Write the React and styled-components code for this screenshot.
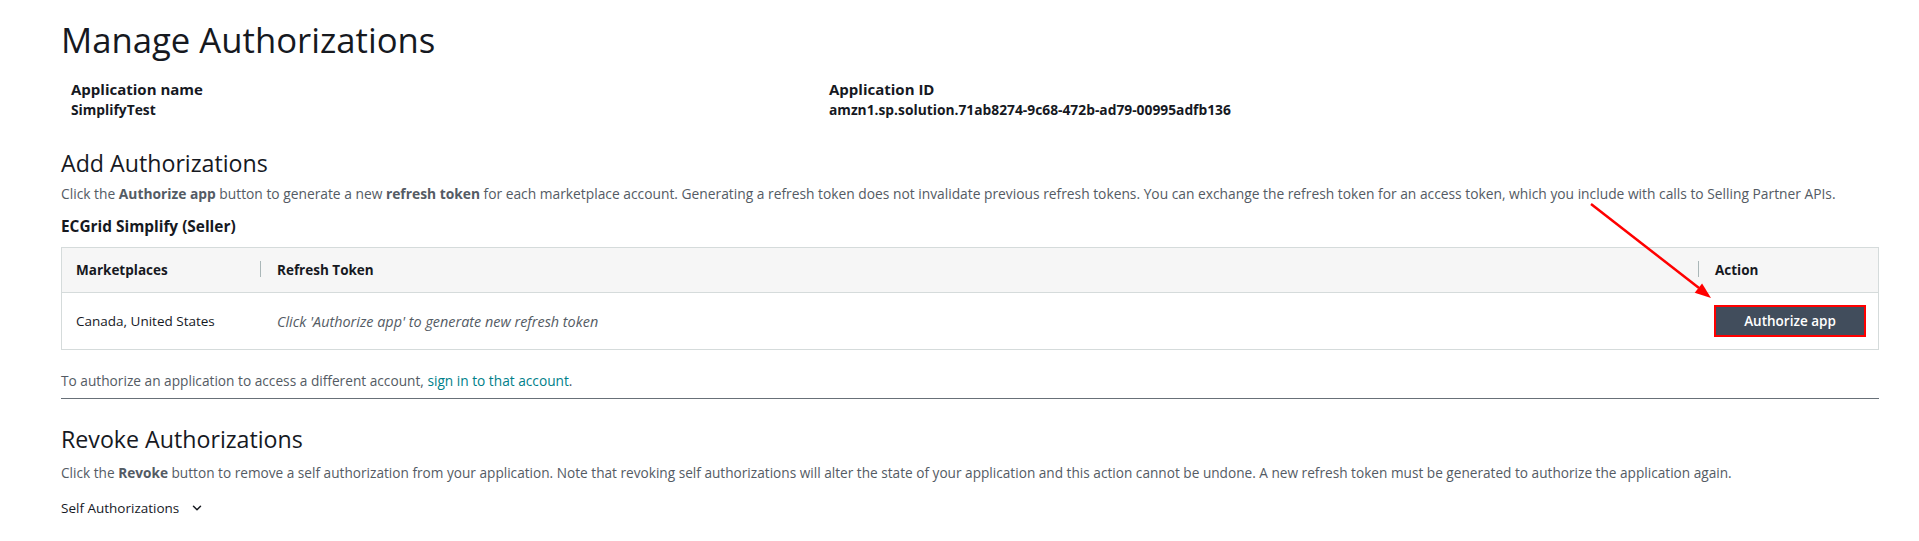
import React from 'react'
import styled, { createGlobalStyle } from 'styled-components'
import { ChevronDown } from 'lucide-react'

const GlobalStyle = createGlobalStyle`
  body {
    margin: 0;
    background: #fff;
    font-family: "Open Sans", "Liberation Sans", sans-serif;
    color: #16191f;
  }
`

const Page = styled.div`
  position: relative;
  padding: 0 40px 0 61px;
`

const Title = styled.h1`
  margin: 0;
  padding-top: 20px;
  font-size: 34.7px;
  font-weight: 400;
  line-height: 40px;
  color: #16191f;
`

const InfoGrid = styled.div`
  display: grid;
  grid-template-columns: 758px 1fr;
  padding: 18px 0 0 10px;
`

const InfoLabel = styled.div`
  font-size: 15px;
  font-weight: 700;
  line-height: 22px;
`

const InfoValue = styled.div`
  font-size: 13.8px;
  font-weight: 700;
  line-height: 20px;
`

const SectionTitle = styled.h2`
  margin: ${p => p.$top || 0}px 0 0;
  font-size: 23.2px;
  font-weight: 400;
  line-height: 30px;
  color: #16191f;
`

const Description = styled.p`
  margin: ${p => p.$top || 6}px 0 0;
  font-size: ${p => p.$size || 13.8}px;
  line-height: 20px;
  color: #545b64;

  b {
    font-weight: 700;
    color: #545b64;
  }
`

const GroupLabel = styled.div`
  margin-top: 13px;
  font-size: 15.4px;
  font-weight: 700;
  line-height: 20px;
`

const Table = styled.div`
  margin-top: 10px;
  border: 1px solid #d5dbdb;
  display: grid;
  grid-template-columns: 198px 1fr 180px;
`

const HeadCell = styled.div`
  position: relative;
  height: 44px;
  display: flex;
  align-items: center;
  padding-left: ${p => (p.$first ? 14 : 17)}px;
  background: #f6f6f6;
  border-bottom: 1px solid #d5dbdb;
  font-size: 13.5px;
  font-weight: 700;

  ${p =>
    !p.$first &&
    `
    &::before {
      content: '';
      position: absolute;
      left: 0;
      top: 13px;
      height: 16px;
      border-left: 1px solid #aab7b8;
    }
  `}
`

const BodyCell = styled.div`
  height: 56px;
  display: flex;
  align-items: center;
  padding-left: ${p => (p.$first ? 14 : 17)}px;
  font-size: ${p => (p.$italic ? 14.4 : 13.5)}px;
  font-style: ${p => (p.$italic ? 'italic' : 'normal')};
  color: ${p => (p.$italic ? '#545b64' : '#16191f')};
`

const AuthorizeButton = styled.button`
  width: 152px;
  height: 32px;
  margin-left: -1px;
  background: #414d5c;
  color: #fff;
  border: 2px solid #ff0000;
  font-family: inherit;
  font-size: 13.5px;
  font-weight: 600;
  cursor: pointer;
`

const Note = styled.p`
  margin: 21px 0 0;
  font-size: 13.7px;
  line-height: 20px;
  color: #545b64;

  a {
    color: #007f8a;
    text-decoration: none;
  }
`

const Divider = styled.hr`
  margin: 7px 0 0;
  border: none;
  border-top: 1.5px solid #687078;
`

const Disclosure = styled.div`
  margin-top: 15px;
  display: flex;
  align-items: center;
  gap: 11px;
  font-size: 13.5px;
  line-height: 20px;
  color: #16191f;
`

const ArrowOverlay = styled.svg`
  position: absolute;
  left: 0;
  top: 0;
  pointer-events: none;
`

export default function App() {
  return (
    <>
      <GlobalStyle />
      <Page>
        <Title>Manage Authorizations</Title>
        <InfoGrid>
          <div>
            <InfoLabel>Application name</InfoLabel>
            <InfoValue>SimplifyTest</InfoValue>
          </div>
          <div>
            <InfoLabel>Application ID</InfoLabel>
            <InfoValue>amzn1.sp.solution.71ab8274-9c68-472b-ad79-00995adfb136</InfoValue>
          </div>
        </InfoGrid>

        <SectionTitle $top={28}>Add Authorizations</SectionTitle>
        <Description>
          Click the <b>Authorize app</b> button to generate a new <b>refresh token</b> for each marketplace account.
          Generating a refresh token does not invalidate previous refresh tokens. You can exchange the refresh token
          for an access token, which you include with calls to Selling Partner APIs.
        </Description>
        <GroupLabel>ECGrid Simplify (Seller)</GroupLabel>
        <Table>
          <HeadCell $first>Marketplaces</HeadCell>
          <HeadCell>Refresh Token</HeadCell>
          <HeadCell>Action</HeadCell>
          <BodyCell $first>Canada, United States</BodyCell>
          <BodyCell $italic>Click 'Authorize app' to generate new refresh token</BodyCell>
          <BodyCell>
            <AuthorizeButton>Authorize app</AuthorizeButton>
          </BodyCell>
        </Table>
        <Note>
          To authorize an application to access a different account, <a href="#">sign in to that account</a>.
        </Note>
        <Divider />

        <SectionTitle $top={25}>Revoke Authorizations</SectionTitle>
        <Description $top={9} $size={13.65}>
          Click the <b>Revoke</b> button to remove a self authorization from your application. Note that revoking self
          authorizations will alter the state of your application and this action cannot be undone. A new refresh
          token must be generated to authorize the application again.
        </Description>
        <Disclosure>
          Self Authorizations
          <ChevronDown size={14} strokeWidth={2.5} />
        </Disclosure>

        <ArrowOverlay width="1919" height="541">
          <line x1="1591" y1="204" x2="1699" y2="288" stroke="#ff0000" strokeWidth="2.5" />
          <polygon points="1711,298 1694.7,292.8 1702.1,283.4" fill="#ff0000" />
        </ArrowOverlay>
      </Page>
    </>
  )
}
